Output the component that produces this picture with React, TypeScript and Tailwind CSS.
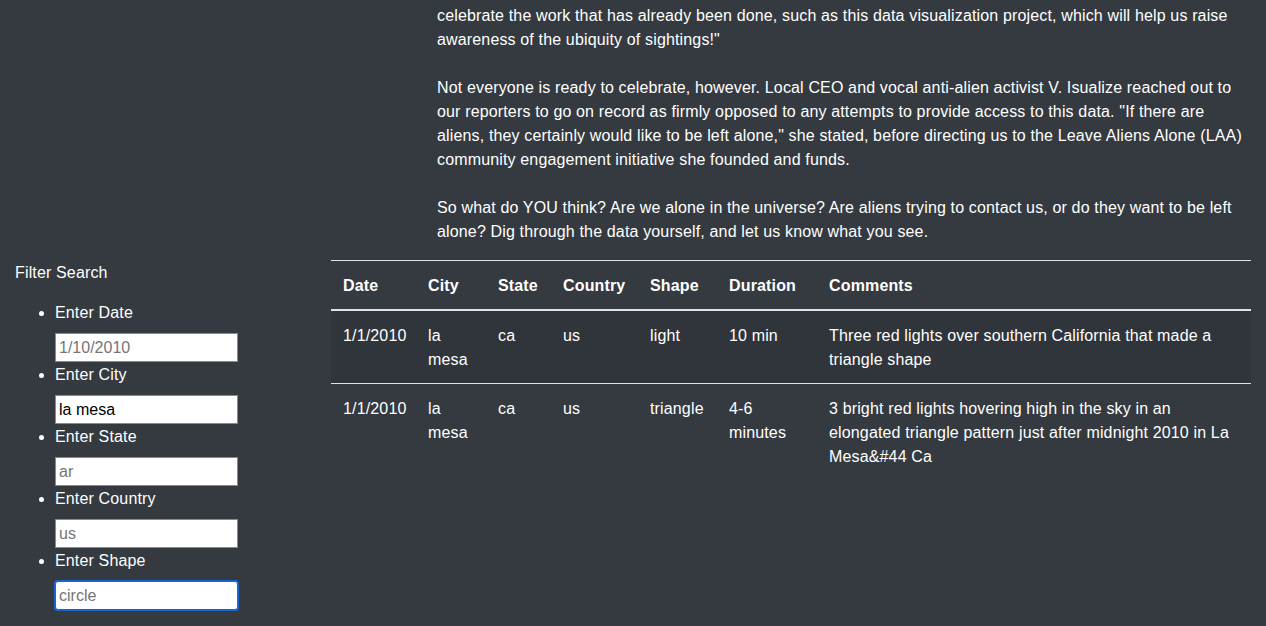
import React from "react";

const lines1 = [
  "the unexplained, digging through everything we gathered, we are ready to finally begin",
  "celebrate the work that has already been done, such as this data visualization project, which will help us raise",
  'awareness of the ubiquity of sightings!"',
];
const lines2 = [
  "Not everyone is ready to celebrate, however. Local CEO and vocal anti-alien activist V. Isualize reached out to",
  'our reporters to go on record as firmly opposed to any attempts to provide access to this data. "If there are',
  'aliens, they certainly would like to be left alone," she stated, before directing us to the Leave Aliens Alone (LAA)',
  "community engagement initiative she founded and funds.",
];
const lines3 = [
  "So what do YOU think? Are we alone in the universe? Are aliens trying to contact us, or do they want to be left",
  "alone? Dig through the data yourself, and let us know what you see.",
];

const rows = [
  ["1/1/2010", "la mesa", "ca", "us", "light", "10 min", "Three red lights over southern California that made a triangle shape"],
  ["1/1/2010", "la mesa", "ca", "us", "triangle", "4-6 minutes", "3 bright red lights hovering high in the sky in an elongated triangle pattern just after midnight 2010 in La Mesa&#44 Ca"],
];

const filters = [
  { label: "Enter Date", ph: "1/10/2010", value: "" },
  { label: "Enter City", ph: "", value: "la mesa" },
  { label: "Enter State", ph: "ar", value: "" },
  { label: "Enter Country", ph: "us", value: "" },
  { label: "Enter Shape", ph: "circle", value: "", focus: true },
];

function Lines({ lines }: { lines: string[] }) {
  return (
    <>
      {lines.map((l, i) => (
        <span key={i} className="block whitespace-nowrap">
          {l}
        </span>
      ))}
    </>
  );
}

export default function App() {
  return (
    <div
      className="min-h-[626px] w-full bg-[#343a40] text-white text-[16px] leading-[24px] tracking-[0.15px] overflow-hidden"
      style={{ fontFamily: '"Liberation Sans", Arial, sans-serif' }}
    >
      <div className="pl-[437px] pr-[15px] mt-[-20px] mb-[16px]">
        <Lines lines={lines1} />
        <div className="h-[24px]" />
        <Lines lines={lines2} />
        <div className="h-[24px]" />
        <Lines lines={lines3} />
      </div>
      <div className="flex">
        <div className="w-[316px] shrink-0 px-[15px]">
          <div className="pt-px">Filter Search</div>
          <ul className="list-disc pl-[40px] mt-[15px]">
            {filters.map((f) => (
              <li key={f.label}>
                <div className="pt-px h-[24px]">{f.label}</div>
                <input
                  readOnly
                  placeholder={f.ph}
                  defaultValue={f.value}
                  className={
                    "block mt-[9px] w-[183px] h-[29px] bg-white text-black text-[16px] px-[3px] tracking-normal placeholder:text-[#757575] outline-none " +
                    (f.focus
                      ? "border border-[#1a64cf] rounded-[3px] shadow-[0_0_0_1px_#1a64cf]"
                      : "border border-[#8a8a8a]")
                  }
                />
              </li>
            ))}
          </ul>
        </div>
        <div className="flex-1 px-[15px]">
          <table className="w-full table-fixed border-collapse text-left">
            <colgroup>
              <col className="w-[85px]" />
              <col className="w-[70px]" />
              <col className="w-[65px]" />
              <col className="w-[87px]" />
              <col className="w-[79px]" />
              <col className="w-[100px]" />
              <col />
            </colgroup>
            <thead>
              <tr>
                {["Date", "City", "State", "Country", "Shape", "Duration", "Comments"].map((h) => (
                  <th
                    key={h}
                    className="pt-[13px] pb-[11px] px-[12px] font-bold align-bottom border-t border-t-[#dee2e6] border-b-2 border-b-[#dee2e6]"
                  >
                    {h}
                  </th>
                ))}
              </tr>
            </thead>
            <tbody>
              {rows.map((r, i) => (
                <tr key={i} className={i % 2 === 0 ? "bg-[#30353b]" : ""}>
                  {r.map((c, j) => (
                    <td key={j} className="pt-[13px] pb-[11px] px-[12px] align-top border-t border-t-[#dee2e6]">
                      {c}
                    </td>
                  ))}
                </tr>
              ))}
            </tbody>
          </table>
        </div>
      </div>
    </div>
  );
}
